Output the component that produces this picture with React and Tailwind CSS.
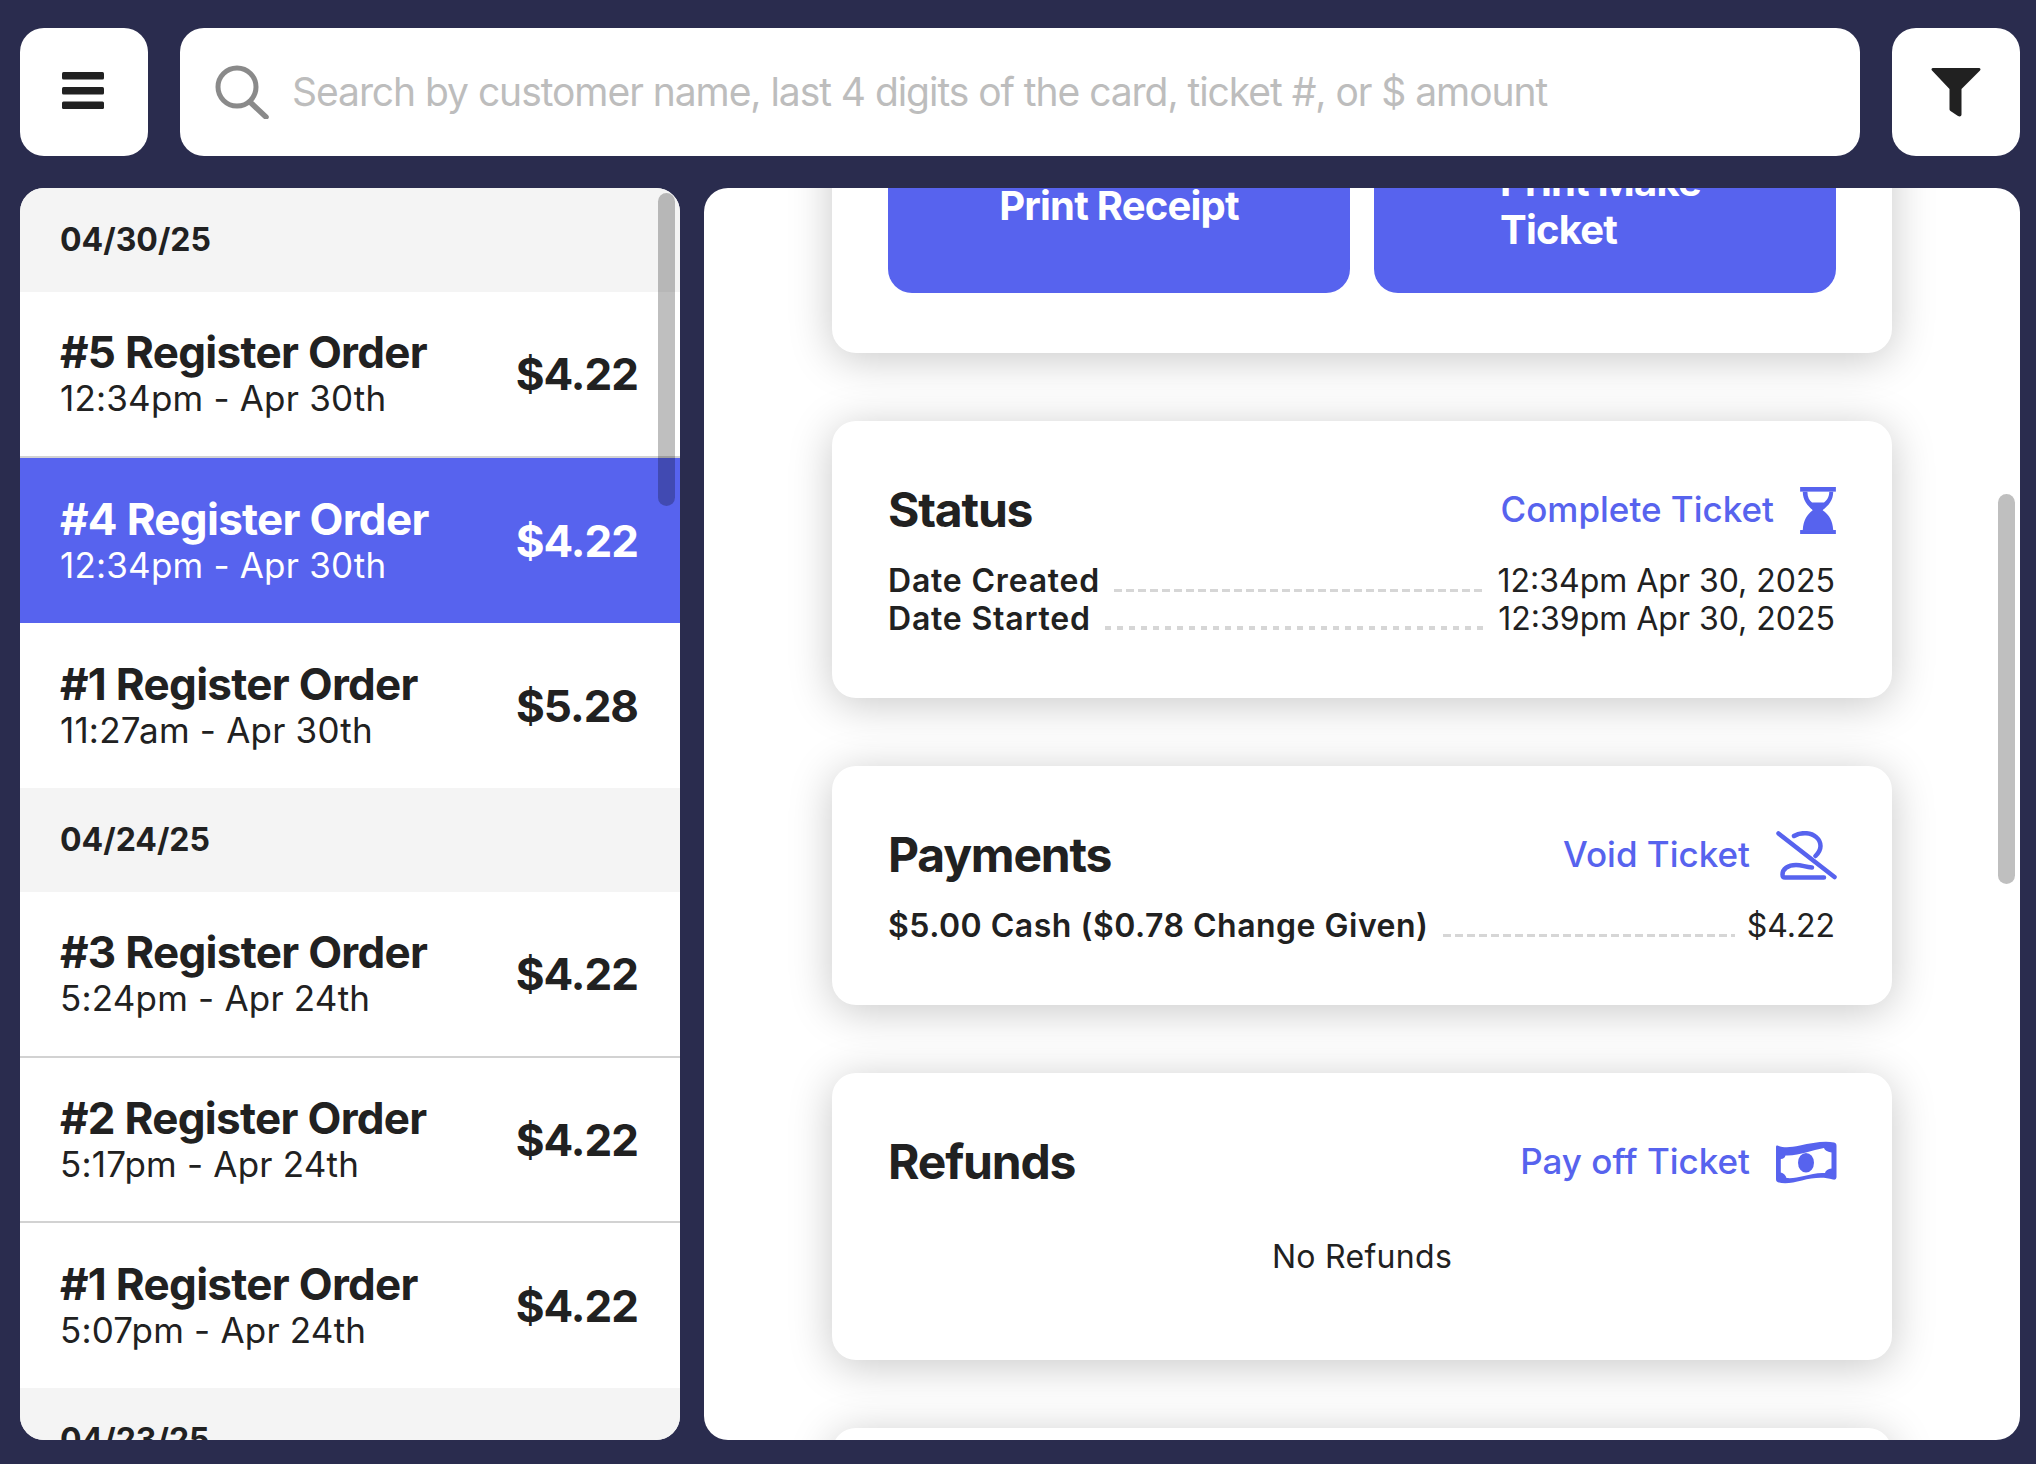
const dayGroups = [
  {
    date: '04/30/25',
    orders: [
      { id: 5, time: '12:34pm - Apr 30th', total: '$4.22', divider: true, height: 'h-[166px]' },
      { id: 4, time: '12:34pm - Apr 30th', total: '$4.22', active: true, height: 'h-[165px]' },
      { id: 1, time: '11:27am - Apr 30th', total: '$5.28', height: 'h-[165px]' },
    ],
  },
  {
    date: '04/24/25',
    orders: [
      { id: 3, time: '5:24pm - Apr 24th', total: '$4.22', divider: true, height: 'h-[166px]' },
      { id: 2, time: '5:17pm - Apr 24th', total: '$4.22', divider: true, height: 'h-[165px]' },
      { id: 1, time: '5:07pm - Apr 24th', total: '$4.22', height: 'h-[165px]' },
    ],
  },
  { date: '04/23/25', orders: [] },
];

function MenuIcon() {
  return (
    <svg width="42" height="37" viewBox="0 0 42 37" fill="#212121" className="mb-[3px] mr-[2px]">
      <rect x="0" y="0" width="42" height="7.5" rx="1.5" />
      <rect x="0" y="15" width="42" height="7.5" rx="1.5" />
      <rect x="0" y="29.5" width="42" height="7.5" rx="1.5" />
    </svg>
  );
}

function SearchIcon() {
  return (
    <svg width="54" height="54" viewBox="0 0 54 54" fill="none" stroke="#8a8a8a" className="shrink-0">
      <circle cx="22" cy="22" r="19" strokeWidth="5" />
      <path d="M35 37 L51 52" strokeWidth="5.5" strokeLinecap="round" />
    </svg>
  );
}

function FilterIcon() {
  return (
    <svg width="50" height="49" viewBox="0 0 50 49" fill="#212121">
      <path d="M2 0 H48 C49.5 0 50 1.5 49 2.5 L30.5 21 V46.5 C30.5 48.5 28.5 49 27 48 L19.5 43 C18.7 42.4 18.5 41.8 18.5 41 V21 L1 2.5 C0 1.5 0.5 0 2 0 Z" />
    </svg>
  );
}

function HourglassIcon() {
  return (
    <svg width="36" height="47" viewBox="0 0 108 142" fill="#5763ee">
      <rect x="0" y="0" width="108" height="14" />
      <rect x="0" y="130" width="108" height="12" />
      <path
        fillRule="evenodd"
        d="M8 14 C8 40 22 55 38 70 C20 85 10 100 8 130 H100 C98 100 88 85 68 70 C86 55 100 40 100 14 Z M22 14 H88 C88 30 80 41 72 47 H36 C28 41 22 30 22 14 Z"
      />
    </svg>
  );
}

function VoidIcon() {
  return (
    <svg width="61" height="49" viewBox="0 0 61 49" fill="none" stroke="#5763ee" strokeWidth="4.5" strokeLinecap="round" strokeLinejoin="round" className="mr-[-1px]">
      <path d="M2.5 2.5 L58.5 46" />
      <path d="M18 5 C22 2.5 26 2 30 2.2 C38 2.5 44.5 8 44.5 15 C44.5 19 42.5 22 39.5 25" />
      <path d="M48 46.5 H9 C7 46.5 6.5 45 6.5 43.5 C6.5 38 12 34 20 34 C26 34 29 36 36 36.5" />
    </svg>
  );
}

function MoneyIcon() {
  return (
    <svg width="61" height="43" viewBox="0 0 61 43" fill="#5763ee" className="mr-[-1px]">
      <path
        fillRule="evenodd"
        d="M1.5 4.5 C8 7 14 6.5 24 4.5 C36 2 48 -0.5 58 1.5 C60 2 60.5 3 60.5 5 V36 C60.5 38 59 39 57 38.5 C47 35.5 36 37 26 39.5 C16 42 8 43.5 1.5 41 C0.5 40.5 0 39.5 0 38 V6 C0 4.8 0.5 4.2 1.5 4.5 Z M4.8 18 C7.5 18 9 16.5 9.5 14.5 C16 15 24 13 30 11.5 C36 10 42 8 48 7 C48.5 9 51 11 55.5 11.5 V27.5 C52 28 49.5 29.5 49 32 C42 31.5 35 33 28 35 C22 36.5 16 37.5 10.5 37 C10 34.5 7.5 32 4.8 31.5 Z"
      />
      <ellipse cx="30" cy="21.7" rx="8" ry="9.8" />
    </svg>
  );
}

function OrderRow({ order }) {
  const color = order.active ? 'bg-[#5763ee] text-white' : 'bg-white text-[#212121]';
  return (
    <div className={`${color} ${order.divider ? 'border-b-2 border-[#d2d2d2]' : ''} ${order.height} pl-10 pr-[42px] flex items-center justify-between`}>
      <div className="flex flex-col mt-[2px]">
        <span className="text-[44px] leading-[46px] font-bold tracking-[-0.7px]">#{order.id} Register Order</span>
        <span className="text-[35px] leading-[46px] tracking-[0.2px]">{order.time}</span>
      </div>
      <span className="text-[44px] font-bold tracking-[-1px]">{order.total}</span>
    </div>
  );
}

function Leader({ dotted }) {
  return (
    <div
      className={
        dotted
          ? 'flex-1 ml-[14px] mr-3 mt-[18px] h-[4px] bg-[repeating-linear-gradient(90deg,#d6d6d6_0_6px,transparent_6px_12px)]'
          : 'flex-1 ml-[14px] mr-3 mt-[18px] h-[3px] bg-[repeating-linear-gradient(90deg,#d6d6d6_0_8px,transparent_8px_12px)]'
      }
    />
  );
}

function DetailRow({ label, value, dotted, wide }) {
  return (
    <div className="flex items-center h-[38px] text-[32px] leading-[38px] text-[#212121]">
      <span className={`font-semibold whitespace-nowrap ${wide ? 'tracking-[0.8px]' : 'tracking-[0.5px]'}`}>{label}</span>
      <Leader dotted={dotted} />
      <span className="whitespace-nowrap mr-[1px]">{value}</span>
    </div>
  );
}

function Card({ title, action, icon, children, className }) {
  return (
    <div className={`bg-white rounded-[24px] shadow-[0_6px_44px_rgba(0,0,0,0.22)] px-14 pt-10 ${className}`}>
      <div className="h-[98px] flex items-center justify-between">
        <h2 className="text-[48px] font-bold tracking-[-1.2px] text-[#212121]">{title}</h2>
        <div className="flex items-center gap-[26px] text-[35px] font-medium text-[#5763ee]">
          <span className="mb-[2px]">{action}</span>
          {icon}
        </div>
      </div>
      {children}
    </div>
  );
}

export default function App() {
  return (
    <div className="w-[2036px] h-[1464px] bg-[#2a2c4e] pl-5 pr-4 pt-7 pb-6 flex flex-col gap-8 font-['Inter',sans-serif] overflow-hidden">
      {/* Top bar */}
      <div className="flex gap-8 h-[128px] shrink-0">
        <button className="w-[128px] bg-white rounded-[24px] flex items-center justify-center">
          <MenuIcon />
        </button>
        <div className="flex-1 bg-white rounded-[24px] flex items-center pl-[35px] gap-[23px]">
          <SearchIcon />
          <input
            className="flex-1 outline-none text-[39px] tracking-[-1.05px] text-[#212121] placeholder:text-[#bdbdbd]"
            placeholder="Search by customer name, last 4 digits of the card, ticket #, or $ amount"
          />
        </div>
        <button className="w-[128px] bg-white rounded-[24px] flex items-center justify-center">
          <FilterIcon />
        </button>
      </div>

      <div className="flex gap-6 flex-1 min-h-0">
        {/* Order list */}
        <div className="relative w-[660px] bg-white rounded-[24px] overflow-hidden">
          {dayGroups.map((group) => (
            <div key={group.date}>
              <div className="h-[104px] bg-[#f4f4f4] pl-10 flex items-center text-[32px] font-bold text-[#212121]">
                {group.date}
              </div>
              {group.orders.map((order) => (
                <OrderRow key={order.time} order={order} />
              ))}
            </div>
          ))}
          <div className="absolute right-[5px] top-[5px] w-[17px] h-[313px] rounded-full bg-black/25" />
        </div>

        {/* Ticket detail */}
        <div className="relative flex-1 bg-white rounded-[24px] overflow-hidden">
          <div className="px-32 mt-[-125px] flex flex-col gap-[68px]">
            <div className="bg-white rounded-[24px] shadow-[0_6px_44px_rgba(0,0,0,0.22)] px-14 pt-14 pb-[60px] grid grid-cols-2 gap-6">
              <button className="h-[174px] rounded-[24px] bg-[#5763ee] text-white text-[40px] font-bold tracking-[-0.8px] flex items-center justify-center">
                Print Receipt
              </button>
              <button className="h-[174px] rounded-[24px] bg-[#5763ee] text-white text-[40px] leading-[48px] font-bold tracking-[-0.8px] text-left pl-[126px]">
                Print Make
                <br />
                Ticket
              </button>
            </div>

            <Card title="Status" action="Complete Ticket" icon={<HourglassIcon />} className="pb-[60px]">
              <div className="mt-[3px]">
                <DetailRow wide label="Date Created" value="12:34pm Apr 30, 2025" />
                <DetailRow wide label="Date Started" value="12:39pm Apr 30, 2025" dotted />
              </div>
            </Card>

            <Card title="Payments" action="Void Ticket" icon={<VoidIcon />} className="pb-[60px]">
              <div className="mt-[3px]">
                <DetailRow label="$5.00 Cash ($0.78 Change Given)" value="$4.22" />
              </div>
            </Card>

            <Card title="Refunds" action="Pay off Ticket" icon={<MoneyIcon />} className="pb-[84px]">
              <div className="mt-[27px] text-center text-[32px] leading-[38px] tracking-[0.3px] text-[#212121]">No Refunds</div>
            </Card>

            <div className="h-[200px] shrink-0 bg-white rounded-[24px] shadow-[0_6px_44px_rgba(0,0,0,0.22)]" />
          </div>
          <div className="absolute right-[5px] top-[306px] w-[17px] h-[390px] rounded-full bg-black/25" />
        </div>
      </div>
    </div>
  );
}
